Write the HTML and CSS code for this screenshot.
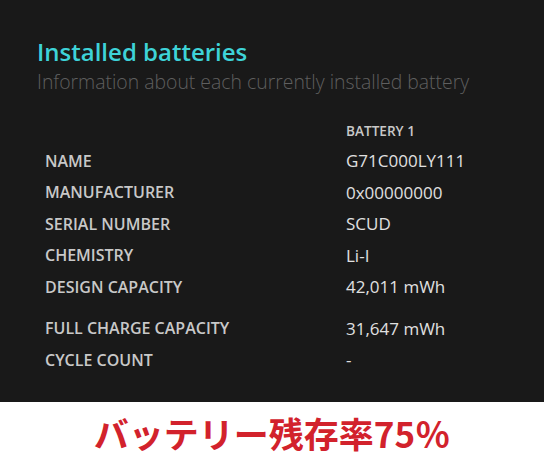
FILE: index.html
```html
<!DOCTYPE html>
<html>
<head>
<meta charset="utf-8">
<link rel="stylesheet" href="styles.css">
</head>
<body>
<div class="panel">
  <h1 class="title">Installed batteries</h1>
  <p class="subtitle">Information about each currently installed battery</p>
  <div class="table">
    <div class="row head"><span class="label"></span><span class="col-head">BATTERY 1</span></div>
    <div class="row"><span class="label">NAME</span><span class="value">G71C000LY111</span></div>
    <div class="row"><span class="label">MANUFACTURER</span><span class="value">0x00000000</span></div>
    <div class="row"><span class="label">SERIAL NUMBER</span><span class="value">SCUD</span></div>
    <div class="row"><span class="label">CHEMISTRY</span><span class="value">Li-I</span></div>
    <div class="row"><span class="label">DESIGN CAPACITY</span><span class="value">42,011 mWh</span></div>
    <div class="row gap"><span class="label">FULL CHARGE CAPACITY</span><span class="value">31,647 mWh</span></div>
    <div class="row"><span class="label">CYCLE COUNT</span><span class="value">-</span></div>
  </div>
</div>
<div class="caption">バッテリー残存率75％</div>
</body>
</html>
```
FILE: styles.css
```css
html, body {
  margin: 0;
  padding: 0;
  background: #ffffff;
}
body {
  width: 544px;
  height: 462px;
  overflow: hidden;
  font-family: "Open Sans", "Noto Sans", sans-serif;
}
.panel {
  background: #191919;
  height: 402px;
  box-sizing: border-box;
  padding: 35px 0 0 37px;
}
.title {
  margin: 0;
  font-size: 24px;
  font-weight: 600;
  color: #3ed3d8;
  line-height: 34px;
}
.subtitle {
  margin: 0;
  font-size: 19.4px;
  font-weight: 300;
  color: #5f5f5f;
  line-height: 26px;
}
.table {
  margin-top: 20px;
  padding-left: 8px;
  display: flex;
  flex-direction: column;
}
.row {
  display: grid;
  grid-template-columns: 301px 1fr;
  height: 31.5px;
  align-items: center;
}
.row.head {
  height: 30px;
}
.row.gap {
  margin-top: 10px;
}
.label {
  font-size: 16px;
  font-weight: 600;
  color: #c8c8c8;
}
.col-head {
  font-size: 13.6px;
  font-weight: 600;
  color: #c8c8c8;
}
.value {
  font-size: 17px;
  font-weight: 400;
  color: #e0e0e0;
}
.caption {
  height: 60px;
  display: flex;
  align-items: center;
  justify-content: center;
  font-family: "Noto Sans CJK JP", sans-serif;
  font-weight: 700;
  font-size: 35px;
  color: #d2222c;
  line-height: 1;
}
```
